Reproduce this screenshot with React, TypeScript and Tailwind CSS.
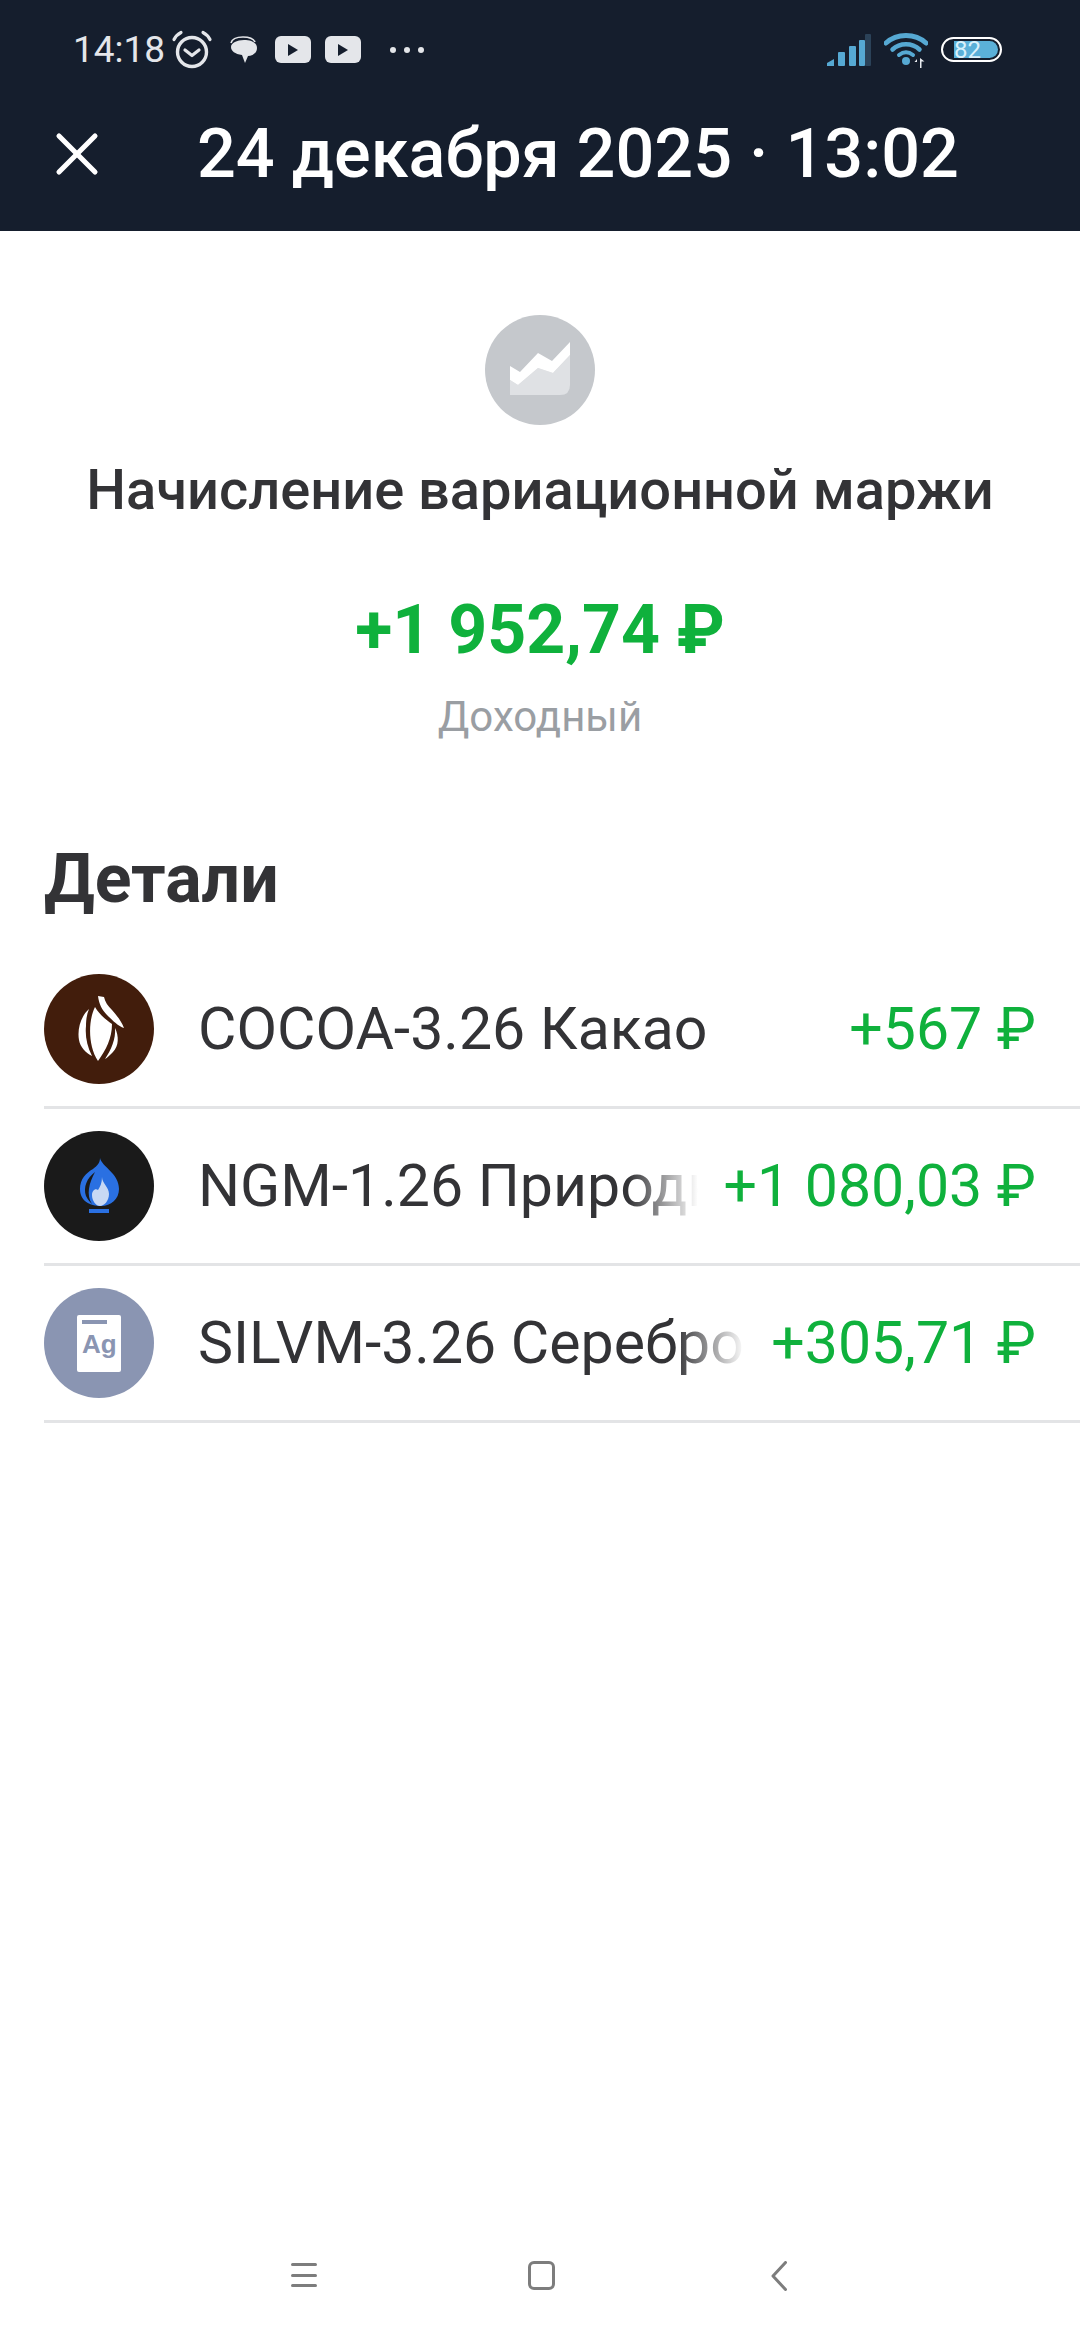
import { X } from "lucide-react";

const font = "font-['Roboto','Noto_Sans',sans-serif]";

function AlarmIcon() {
  return (
    <svg width="42" height="40" viewBox="0 0 42 40" fill="none" className="text-[#e4e6ea]">
      <circle cx="21" cy="22" r="14.5" stroke="currentColor" strokeWidth="3.4" />
      <path d="M14 22l7 5.500 7-5.500" stroke="currentColor" strokeWidth="3.2" strokeLinecap="round" strokeLinejoin="round" transform="translate(0 -2)" />
      <path d="M3 9.500c1.500-3 4-5.500 7-7M39 9.500c-1.500-3-4-5.500-7-7" stroke="currentColor" strokeWidth="3.2" strokeLinecap="round" />
    </svg>
  );
}

function ChatIcon() {
  return (
    <svg width="30" height="30" viewBox="0 0 30 30">
      <path d="M2 8c1-4 6-6 12-6s10 1 12 5" fill="none" stroke="#e4e6ea" strokeWidth="1.600" />
      <path d="M15 5c7 0 13 2.500 13 8s-5 8-9 8l-3 7-3-8C6 19 2 16 2 12c0-4 6-7 13-7z" fill="#e4e6ea" />
    </svg>
  );
}

function PlayBadge() {
  return (
    <div className="flex h-[27px] w-[36px] items-center justify-center rounded-[6px] bg-[#e4e6ea]">
      <div className="h-0 w-0 border-y-[6px] border-l-[10px] border-y-transparent border-l-[#151e2d]" />
    </div>
  );
}

function SignalIcon() {
  return (
    <svg width="44" height="32" viewBox="0 0 44 32">
      <path d="M0 32v-3l7-4v7z" fill="#56a9d3" />
      <rect x="11" y="18" width="7" height="14" rx="1" fill="#56a9d3" />
      <rect x="22" y="12" width="7" height="20" rx="1" fill="#56a9d3" />
      <rect x="32" y="6" width="6" height="26" rx="1" fill="#56a9d3" />
      <rect x="38" y="0" width="6" height="32" rx="1" fill="#2b4258" />
    </svg>
  );
}

function WifiIcon() {
  return (
    <svg width="44" height="36" viewBox="0 0 44 36" fill="none">
      <path d="M2 11C13 1 31 1 42 11" stroke="#56a9d3" strokeWidth="5" strokeLinecap="round" />
      <path d="M8.500 17.500C16 10.500 28 10.500 35.500 17.500" stroke="#56a9d3" strokeWidth="4.500" strokeLinecap="round" />
      <path d="M15 23c4.500-3.500 9.500-3.500 14 0" stroke="#56a9d3" strokeWidth="4" strokeLinecap="round" />
      <circle cx="22" cy="29" r="4" fill="#56a9d3" />
      <path d="M33 36v-6h-2.500l2.500-3zM36 26v10h1.500v-6.500l3 0-4.500-3.500z" fill="#e8ebef" />
    </svg>
  );
}

function Battery() {
  return (
    <div className="flex h-[25px] w-[61px] items-center rounded-full border-[2.5px] border-white py-[2px] pl-[11px] pr-[2px]">
      <div className="flex h-full flex-1 items-center rounded-r-full bg-[#5bb0d8] text-[24px] leading-none text-[#d9f1fb]">82</div>
    </div>
  );
}

function StatusBar() {
  return (
    <div className="flex h-[98px] items-center pl-[73px] pr-[78px] pt-[1px]">
      <span className="text-[37px] leading-none text-[#e4e6ea]">14:18</span>
      <div className="ml-[6px]">
        <AlarmIcon />
      </div>
      <div className="ml-[16px]">
        <ChatIcon />
      </div>
      <div className="ml-[16px]">
        <PlayBadge />
      </div>
      <div className="ml-[14px]">
        <PlayBadge />
      </div>
      <div className="ml-[29px] flex gap-[8px]">
        <span className="h-[6px] w-[6px] rounded-full bg-[#e4e6ea]" />
        <span className="h-[6px] w-[6px] rounded-full bg-[#e4e6ea]" />
        <span className="h-[6px] w-[6px] rounded-full bg-[#e4e6ea]" />
      </div>
      <div className="ml-auto flex items-center gap-[13px]">
        <SignalIcon />
        <WifiIcon />
        <Battery />
      </div>
    </div>
  );
}

function CocoaIcon() {
  return (
    <svg width="110" height="110" viewBox="0 0 110 110" fill="#fff">
      <path d="M51 33C44 47 44 72 54 87C62 76 68 64 68 50C62 46 55 40 51 33Z" />
      <path d="M45 35C37 42 33 55 35 66C36 73 42 79 48 82C43 72 41 62 42 52C42 45 43 40 45 35Z" />
      <path d="M71 54C75 62 75 72 69 78C66 81 63 84 61 85C67 76 72 65 71 54Z" />
      <path d="M54 22L60 23C61 28 64 32 68 36C72 41 77 46 80 54C74 52 68 46 63 41C58 36 55 30 54 22Z" />
    </svg>
  );
}

function GasIcon() {
  return (
    <svg width="110" height="110" viewBox="0 0 110 110">
      <path d="M56 27C58 36 75 42 75 58C75 68 67 75 57 75C46 75 36 70 36 58C36 48 42 42 49 38C53 35 56 32 56 27Z" fill="#2a70e2" />
      <path d="M51 41C43 47 39 56 42 65C44 69 46 71 48 73C42 64 45 52 51 41Z" fill="#1a1a1a" />
      <path d="M58 46C58 52 65 56 65 63C65 70 60 75 56 75C52 75 48 70 48 64C48 60 51 57 54 59C56 56 58 52 58 46Z" fill="#c7d8f4" />
      <rect x="45" y="78" width="20" height="4" fill="#2a70e2" />
    </svg>
  );
}

function SilverIcon() {
  return (
    <div className="flex h-[57px] w-[44px] flex-col rounded-[2px] bg-white px-[5px] pt-[5px]">
      <div className="h-[4px] w-[25px] bg-[#8a95b2]" />
      <span className="mt-[7px] text-center font-['Liberation_Sans',sans-serif] text-[26px] font-bold leading-[26px] text-[#8a95b2]">Ag</span>
    </div>
  );
}

function TrendIcon() {
  return (
    <svg width="110" height="110" viewBox="0 0 110 110">
      <path d="M25 65L33 70L53 53L68 58L85 40V70Q85 80 75 80H25Z" fill="#dfe1e4" />
      <path d="M25 51L35 57L53 38L67 46L85 27V40L68 58L53 53L33 70L25 65Z" fill="#fff" />
    </svg>
  );
}

interface DetailRowProps {
  icon: React.ReactNode;
  iconClass: string;
  name: string;
  amount: string;
}

function DetailRow({ icon, iconClass, name, amount }: DetailRowProps) {
  return (
    <div className="flex h-[157px] items-center border-b-[3px] border-[#e3e4e6] pr-[44px]">
      <div className={`flex h-[110px] w-[110px] shrink-0 items-center justify-center rounded-full ${iconClass}`}>{icon}</div>
      <div className="relative ml-[44px] min-w-0 flex-1 overflow-hidden whitespace-nowrap text-[59px] text-[#333336]">
        {name}
        <div className="absolute inset-y-0 right-0 w-[70px] bg-gradient-to-r from-white/0 to-white" />
      </div>
      <span className="ml-[26px] shrink-0 whitespace-nowrap text-[59px] text-[#0fb13c]">{amount}</span>
    </div>
  );
}

export default function App() {
  return (
    <div className={`flex h-[2340px] w-[1080px] flex-col bg-white ${font}`}>
      <header className="h-[231px] bg-[#151e2d]">
        <StatusBar />
        <div className="flex h-[112px] items-center pl-[41px]">
          <X size={72} strokeWidth={1.7} className="text-white" />
          <h1 className="ml-[84px] whitespace-nowrap text-[68.400px] font-medium leading-none text-white">24 декабря 2025 · 13:02</h1>
        </div>
      </header>

      <main className="flex flex-1 flex-col">
        <div className="mt-[84px] flex flex-col items-center">
          <div className="h-[110px] w-[110px] rounded-full bg-[#c5c8cc]">
            <TrendIcon />
          </div>
          <p className="mt-[35px] whitespace-nowrap text-[56px] font-medium leading-[60px] text-[#333336]">Начисление вариационной маржи</p>
          <p className="mt-[70px] whitespace-nowrap text-[68px] font-bold leading-[80px] text-[#0fb13c]">+1 952,74 ₽</p>
          <p className="mt-[22px] text-[42px] leading-[50px] text-[#9a9ea3]">Доходный</p>
        </div>

        <section className="mt-[97px] pl-[44px]">
          <h2 className="text-[68px] font-bold leading-[80px] text-[#333336]">Детали</h2>
          <div className="mt-[33px]">
            <DetailRow icon={<CocoaIcon />} iconClass="bg-[#421d0c]" name="COCOA-3.26 Какао" amount="+567 ₽" />
            <DetailRow icon={<GasIcon />} iconClass="bg-[#1a1a1a]" name="NGM-1.26 Природный газ" amount="+1 080,03 ₽" />
            <DetailRow icon={<SilverIcon />} iconClass="bg-[#8a95b2]" name="SILVM-3.26 Серебро" amount="+305,71 ₽" />
          </div>
        </section>
      </main>

      <nav className="flex h-[132px] items-start pl-[291px] pt-[55px] text-[#7d7d7d]">
        <div className="flex h-[24px] w-[26px] flex-col justify-between">
          <span className="h-[3px] rounded-full bg-current" />
          <span className="h-[3px] rounded-full bg-current" />
          <span className="h-[3px] rounded-full bg-current" />
        </div>
        <div className="ml-[211px] mt-[-2px] h-[29px] w-[27px] rounded-[6px] border-[3px] border-current" />
        <svg width="16" height="30" viewBox="0 0 16 30" fill="none" className="ml-[216px] mt-[-2px]">
          <path d="M14.500 1.500L2 15L14.500 28.500" stroke="currentColor" strokeWidth="3" strokeLinecap="round" strokeLinejoin="round" />
        </svg>
      </nav>
    </div>
  );
}
